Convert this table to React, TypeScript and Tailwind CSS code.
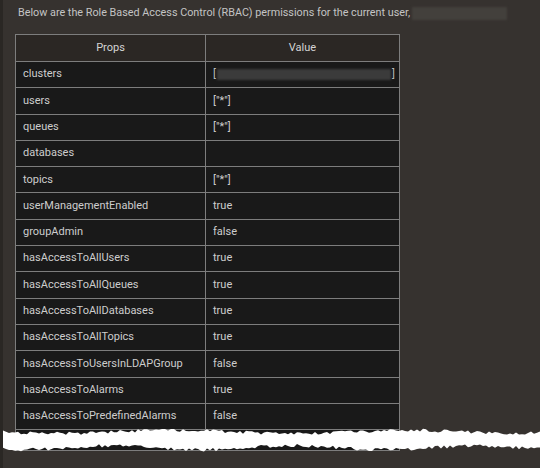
import React from 'react';

const rows: [string, string][] = [
  ['clusters', '__redacted__'],
  ['users', '["*"]'],
  ['queues', '["*"]'],
  ['databases', ''],
  ['topics', '["*"]'],
  ['userManagementEnabled', 'true'],
  ['groupAdmin', 'false'],
  ['hasAccessToAllUsers', 'true'],
  ['hasAccessToAllQueues', 'true'],
  ['hasAccessToAllDatabases', 'true'],
  ['hasAccessToAllTopics', 'true'],
  ['hasAccessToUsersInLDAPGroup', 'false'],
  ['hasAccessToAlarms', 'true'],
  ['hasAccessToPredefinedAlarms', 'false'],
];

// cheap deterministic noise so the tear looks ragged
const noise = (i: number, s: number) => {
  const v = Math.sin(i * 12.9898 + s * 78.233) * 43758.5453;
  return v - Math.floor(v);
};

const tearPath = () => {
  const top: string[] = [];
  const bottom: string[] = [];
  for (let x = 0; x <= 540; x += 3) {
    const t = 4 + Math.sin(x / 37) * 1.5 + noise(x, 1) * 3.5;
    top.push(`${x} ${t.toFixed(1)}`);
  }
  for (let x = 540; x >= 0; x -= 3) {
    const b = 20 + Math.sin(x / 29 + 1) * 2 + noise(x, 2) * 3.5;
    bottom.push(`${x} ${b.toFixed(1)}`);
  }
  return `M${top.join(' L')} L${bottom.join(' L')} Z`;
};

const TornEdge = () => (
  <svg className="absolute left-0 top-[426px]" width="540" height="30" viewBox="0 0 540 30">
    <path fill="#ffffff" d={tearPath()} />
  </svg>
);

export default function App() {
  return (
    <div
      className="relative w-[540px] h-[468px] overflow-hidden bg-[#36322f] border-l-[3px] border-[#2a2724] text-[#cfcfcf]"
      style={{ fontFamily: 'Roboto, "Liberation Sans", sans-serif' }}
    >
      <div className="pl-[15px] pt-[5px] flex items-center text-[10.8px] leading-[16px] text-[#c4c4c4]">
        <span>Below are the Role Based Access Control (RBAC) permissions for the current user,</span>
        <span className="ml-[2px] w-[95px] h-[13px] bg-[#43403c] blur-[1px]"></span>
      </div>

      <table className="ml-[12px] mt-[13px] w-[385px] border-collapse text-[11px] border border-[#7d7d7d]">
        <thead>
          <tr className="h-[27px] bg-[#2b2724]">
            <th className="w-[190px] border border-[#7d7d7d] font-normal text-center text-[#d4d4d4]">Props</th>
            <th className="border border-[#7d7d7d] font-normal text-center text-[#d4d4d4]">Value</th>
          </tr>
        </thead>
        <tbody>
          {rows.map(([k, v]) => (
            <tr key={k} className="h-[26.3px] bg-[#191919]">
              <td className="border border-[#7d7d7d] pl-[7px] text-[#cdcdcd]">{k}</td>
              <td className="border border-[#7d7d7d] pl-[7px] text-[#cdcdcd]">
                {v === '__redacted__' ? (
                  <div className="flex items-center text-[#bdbdbd]">
                    <span>[</span>
                    <span className="flex-1 h-[11px] mx-[1px] bg-[#3b3b3b] blur-[1px]"></span>
                    <span className="mr-[4px]">]</span>
                  </div>
                ) : (
                  v
                )}
              </td>
            </tr>
          ))}
          <tr className="h-[21px] bg-[#191919]">
            <td className="border border-[#7d7d7d]"></td>
            <td className="border border-[#7d7d7d]"></td>
          </tr>
        </tbody>
      </table>

      <TornEdge />
    </div>
  );
}
